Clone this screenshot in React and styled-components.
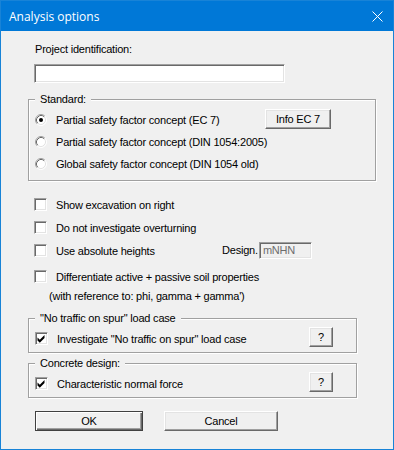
import React from "react";
import styled, { createGlobalStyle } from "styled-components";

const Global = createGlobalStyle`
  html, body { margin: 0; padding: 0; background: #f0f0f0; }
  body { width: 394px; height: 450px; overflow: hidden; }
  *, *::before, *::after { box-sizing: border-box; }
`;

const Window = styled.div`
  width: 394px;
  height: 450px;
  border: 1px solid #1883d7;
  background: #f0f0f0;
  display: flex;
  flex-direction: column;
  font-family: "Liberation Sans", Arial, sans-serif;
  font-size: 11px;
  letter-spacing: -0.2px;
  color: #000;
`;

const TitleBar = styled.div`
  height: 30px;
  flex: 0 0 30px;
  background: #0078d7;
  display: flex;
  align-items: center;
  justify-content: space-between;
  padding: 0 10px 0 8px;
  color: #fff;
  font-family: "Open Sans", "Noto Sans", sans-serif;
  font-size: 12px;
  letter-spacing: 0;
`;

const Body = styled.div`
  display: flex;
  flex-direction: column;
  align-items: flex-start;
  padding-left: 27px;
`;

const Label = styled.div`
  height: 13px;
  line-height: 13px;
  margin: ${(p) => p.$m || "0"};
  white-space: nowrap;
`;

const Sunken = styled.div`
  background: ${(p) => (p.$disabled ? "#f0f0f0" : "#fff")};
  border: 1px solid;
  border-color: #a0a0a0 #fff #fff #a0a0a0;
  box-shadow: inset 1px 1px 0 #696969, inset -1px -1px 0 #e3e3e3;
  width: ${(p) => p.$w}px;
  height: ${(p) => p.$h}px;
  margin: ${(p) => p.$m || "0"};
  color: #6d6d6d;
  line-height: ${(p) => p.$h - 2}px;
  padding-left: 3px;
  white-space: nowrap;
`;

const Group = styled.div`
  position: relative;
  width: ${(p) => p.$w}px;
  margin-top: ${(p) => p.$mt}px;
  padding: ${(p) => p.$pad};
  border: 1px solid #a0a0a0;
  box-shadow: inset 1px 1px 0 #fff, 1px 1px 0 #fff;
  display: flex;
  flex-direction: column;
`;

const Legend = styled.div`
  position: absolute;
  top: -7px;
  left: 6px;
  height: 13px;
  line-height: 13px;
  padding: 0 5px;
  background: #f0f0f0;
  white-space: nowrap;
`;

const Row = styled.div`
  display: flex;
  align-items: center;
  height: ${(p) => p.$h || 22}px;
  padding-left: 6px;
  padding-right: ${(p) => p.$pr || 0}px;
  margin-top: ${(p) => p.$mt || 0}px;
  white-space: nowrap;
`;

const RowText = styled.span`
  margin-left: 9px;
  ${(p) => (p.$w ? `flex: 0 0 ${p.$w}px;` : "")}
`;

const CheckBox = styled.span`
  width: 13px;
  height: 13px;
  flex: 0 0 13px;
  background: #fff;
  border: 1px solid;
  border-color: #a0a0a0 #fff #fff #a0a0a0;
  box-shadow: inset 1px 1px 0 #696969, inset -1px -1px 0 #e3e3e3;
  display: flex;
`;

const Button = styled.div`
  width: ${(p) => p.$w}px;
  height: 20px;
  margin-left: ${(p) => p.$ml || "0"};
  align-self: flex-start;
  background: #f0f0f0;
  border: 1px solid;
  border-color: ${(p) =>
    p.$default ? "#404040" : "#fff #696969 #696969 #fff"};
  box-shadow: ${(p) =>
    p.$default
      ? "inset 1px 1px 0 #fff, inset -1px -1px 0 #696969, inset -2px -2px 0 #a0a0a0"
      : "inset -1px -1px 0 #a0a0a0, inset 1px 1px 0 #e3e3e3"};
  display: flex;
  align-items: center;
  justify-content: center;
  line-height: 13px;
  white-space: nowrap;
`;

const ButtonBar = styled.div`
  display: flex;
  gap: 21px;
  margin-top: 13px;
  padding-left: 7px;
`;

const Radio = ({ checked }) => (
  <svg width="12" height="12" viewBox="0 0 12 12" style={{ flex: "0 0 12px" }}>
    <circle cx="6" cy="6" r="5" fill="#fff" />
    <path d="M2.11 9.89 A5.5 5.5 0 0 1 9.89 2.11" fill="none" stroke="#a0a0a0" />
    <path d="M9.89 2.11 A5.5 5.5 0 0 1 2.11 9.89" fill="none" stroke="#ffffff" />
    <path d="M2.82 9.18 A4.5 4.5 0 0 1 9.18 2.82" fill="none" stroke="#696969" />
    <path d="M9.18 2.82 A4.5 4.5 0 0 1 2.82 9.18" fill="none" stroke="#e3e3e3" />
    {checked && <circle cx="6" cy="6" r="2" fill="#000" />}
  </svg>
);

const Check = ({ checked }) => (
  <CheckBox>
    {checked && (
      <svg width="11" height="11" viewBox="0 0 11 11">
        <polygon points="1.5,4.5 3.8,6.8 8.5,2 8.5,5 3.8,9.7 1.5,7.4" fill="#000" />
      </svg>
    )}
  </CheckBox>
);

const CloseIcon = () => (
  <svg width="11" height="11" viewBox="0 0 11 11">
    <path d="M0.5 0.5 L10.5 10.5 M10.5 0.5 L0.5 10.5" stroke="#fff" strokeWidth="1" />
  </svg>
);

export default function App() {
  return (
    <>
      <Global />
      <Window>
        <TitleBar>
          <span>Analysis options</span>
          <CloseIcon />
        </TitleBar>
        <Body>
          <Label $m="12px 0 0 7px">Project identification:</Label>
          <Sunken $w={251} $h={19} $m="8px 0 0 6px" />

          <Group $w={348} $mt={16} $pad="9px 0 5px 0">
            <Legend>Standard:</Legend>
            <Row $pr={44}>
              <Radio checked />
              <RowText>Partial safety factor concept (EC 7)</RowText>
              <Button $w={66} $ml="auto">Info EC 7</Button>
            </Row>
            <Row>
              <Radio />
              <RowText>Partial safety factor concept (DIN 1054:2005)</RowText>
            </Row>
            <Row>
              <Radio />
              <RowText>Global safety factor concept (DIN 1054 old)</RowText>
            </Row>
          </Group>

          <Row $h={23} $mt={12}>
            <Check />
            <RowText>Show excavation on right</RowText>
          </Row>
          <Row $h={23}>
            <Check />
            <RowText>Do not investigate overturning</RowText>
          </Row>
          <Row $h={23}>
            <Check />
            <RowText $w={166}>Use absolute heights</RowText>
            <Label>Design.</Label>
            <Sunken $w={53} $h={17} $m="0 0 0 1px" $disabled>
              mNHN
            </Sunken>
          </Row>
          <Row $h={23} $mt={3}>
            <Check />
            <RowText>Differentiate active + passive soil properties</RowText>
          </Row>
          <Label $m="2px 0 0 21px">(with reference to: phi, gamma + gamma')</Label>

          <Group $w={329} $mt={15} $pad="8px 0 2px 0">
            <Legend>"No traffic on spur" load case</Legend>
            <Row $h={23} $pr={23}>
              <Check checked />
              <RowText>Investigate "No traffic on spur" load case</RowText>
              <Button $w={24} $ml="auto">?</Button>
            </Row>
          </Group>

          <Group $w={329} $mt={10} $pad="8px 0 2px 0">
            <Legend>Concrete design:</Legend>
            <Row $h={23} $pr={23}>
              <Check checked />
              <RowText>Characteristic normal force</RowText>
              <Button $w={24} $ml="auto">?</Button>
            </Row>
          </Group>

          <ButtonBar>
            <Button $w={108} $default>OK</Button>
            <Button $w={114}>Cancel</Button>
          </ButtonBar>
        </Body>
      </Window>
    </>
  );
}
